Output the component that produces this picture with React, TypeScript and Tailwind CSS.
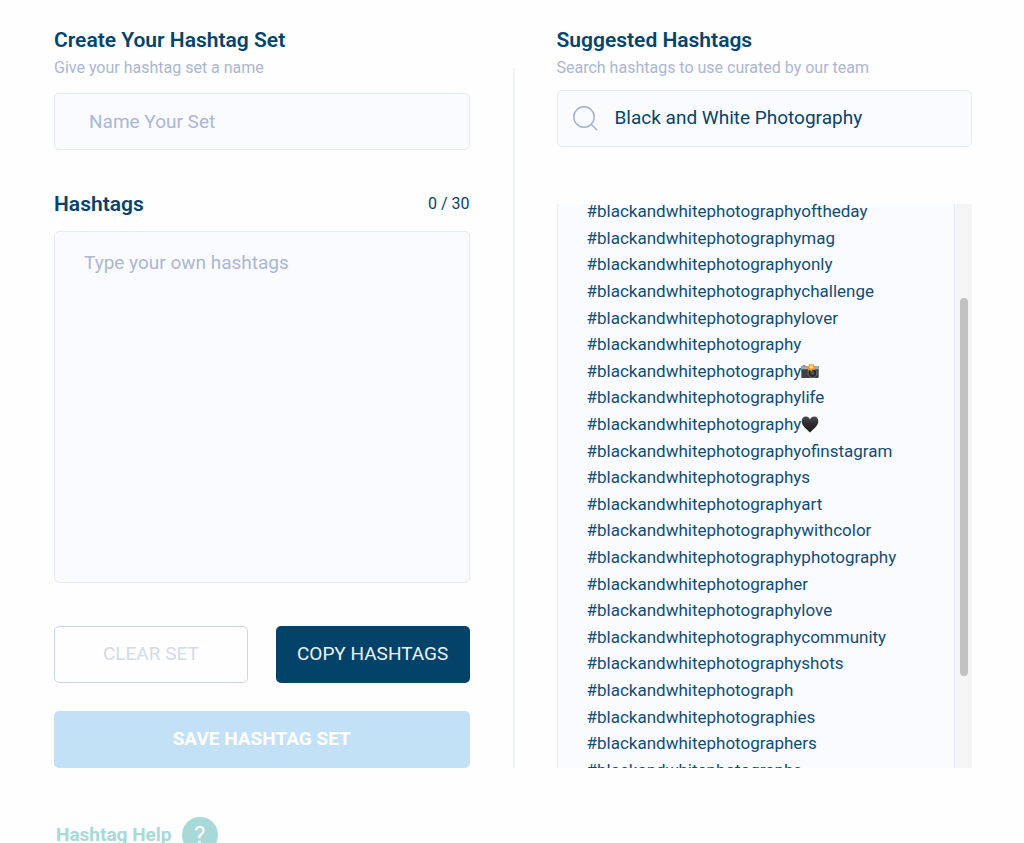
import React from "react";

const hashtags: { tag: string; symbol?: "camera" | "heart" }[] = [
  { tag: "#blackandwhitephotographyoftheday" },
  { tag: "#blackandwhitephotographymag" },
  { tag: "#blackandwhitephotographyonly" },
  { tag: "#blackandwhitephotographychallenge" },
  { tag: "#blackandwhitephotographylover" },
  { tag: "#blackandwhitephotography" },
  { tag: "#blackandwhitephotography", symbol: "camera" },
  { tag: "#blackandwhitephotographylife" },
  { tag: "#blackandwhitephotography", symbol: "heart" },
  { tag: "#blackandwhitephotographyofinstagram" },
  { tag: "#blackandwhitephotographys" },
  { tag: "#blackandwhitephotographyart" },
  { tag: "#blackandwhitephotographywithcolor" },
  { tag: "#blackandwhitephotographyphotography" },
  { tag: "#blackandwhitephotographer" },
  { tag: "#blackandwhitephotographylove" },
  { tag: "#blackandwhitephotographycommunity" },
  { tag: "#blackandwhitephotographyshots" },
  { tag: "#blackandwhitephotograph" },
  { tag: "#blackandwhitephotographies" },
  { tag: "#blackandwhitephotographers" },
  { tag: "#blackandwhitephotographs" },
];

function CameraSymbol() {
  return (
    <svg viewBox="0 0 18 16" className="h-4 w-[18px]" role="img" aria-label="camera with flash">
      <rect x="0.3" y="3" width="17.4" height="12" rx="1" fill="#3f4143" />
      <path d="M0.3 4a1 1 0 0 1 1-1h15.4a1 1 0 0 1 1 1v2.2H0.3z" fill="#a9aaa8" />
      <rect x="1.5" y="2.2" width="3" height="1.2" fill="#77787a" />
      <circle cx="11.5" cy="10" r="4.4" fill="#1c1e21" stroke="#85878a" strokeWidth="0.8" />
      <circle cx="11.5" cy="10" r="2.4" fill="#454d59" />
      <path d="M10 0l1 2 2-1.3.1 2.3 2 .6-1.7 1.5.8 2-2.3-.3L10 8.7 8.9 6.8l-2.2.6.6-2.2L5.6 3.8l2.2-.7L7.7.8l1.7 1z" fill="#f79a1c" />
      <circle cx="10.3" cy="4" r="1.7" fill="#ffe07a" />
    </svg>
  );
}

function HeartSymbol() {
  return (
    <svg viewBox="0 0 18 17" className="h-[17px] w-[18px]" role="img" aria-label="black heart">
      <defs>
        <linearGradient id="heart-shade" x1="0" y1="0" x2="0" y2="1">
          <stop offset="0" stopColor="#4a4a4a" />
          <stop offset="0.5" stopColor="#2b2b2b" />
          <stop offset="1" stopColor="#1d1d1d" />
        </linearGradient>
      </defs>
      <path
        d="M9 16.5C6.5 13.5.7 10.3.7 5.2.7 2.4 2.6.6 4.9.6 6.8.6 8.3 1.7 9 3.4 9.7 1.7 11.2.6 13.1.6c2.3 0 4.2 1.8 4.2 4.6 0 5.1-5.8 8.3-8.3 11.3z"
        fill="url(#heart-shade)"
      />
    </svg>
  );
}

function SearchIcon() {
  return (
    <svg viewBox="0 0 26 26" className="h-[26px] w-[26px] shrink-0" fill="none" stroke="#a3b0cf" strokeWidth="1.5" aria-hidden="true">
      <circle cx="11" cy="11" r="10.2" />
      <path d="M18.2 18.2L24.2 24.2" />
    </svg>
  );
}

export default function App() {
  return (
    <main className="h-screen overflow-hidden bg-[#fefefe] pt-[26px] pr-[52px] pl-[54px] font-[Roboto,'Liberation_Sans',sans-serif] text-[#05446b]">
      <div className="flex">
        <section className="flex min-w-0 flex-1 flex-col">
          <h2 className="text-[21px] leading-7 font-semibold">
            <label htmlFor="set-name">Create Your Hashtag Set</label>
          </h2>
          <p className="text-base leading-7 text-[#abb6d3]">Give your hashtag set a name</p>
          <input
            id="set-name"
            type="text"
            placeholder="Name Your Set"
            className="mt-[11px] h-[57px] w-full rounded-[5px] border border-[#e5e9fa] bg-[#fafbff] px-[34px] text-[19px] outline-none placeholder:text-[#abb6d3]"
          />
          <div className="mt-10 flex items-center justify-between">
            <h2 className="text-[21px] leading-7 font-semibold">
              <label htmlFor="own-hashtags">Hashtags</label>
            </h2>
            <span className="text-base leading-7">0 / 30</span>
          </div>
          <textarea
            id="own-hashtags"
            placeholder="Type your own hashtags"
            className="mt-[13px] h-[352px] w-full resize-none rounded-[5px] border border-[#e5e9fa] bg-[#fafbff] px-[29px] py-[17px] text-[19px] leading-7 outline-none placeholder:text-[#abb6d3]"
          />
          <div className="mt-[43px] grid grid-cols-2 gap-7">
            <button type="button" className="h-[57px] rounded-[5px] border border-[#ced5e7] text-[19px] text-[#d5dae8]">
              CLEAR SET
            </button>
            <button type="button" className="h-[57px] rounded-[5px] bg-[#044369] text-[19px] text-[#eef3f8]">
              COPY HASHTAGS
            </button>
          </div>
          <button type="button" className="mt-7 h-[57px] rounded-[5px] bg-[#c2e1f7] text-[19px] font-bold text-white">
            SAVE HASHTAG SET
          </button>
        </section>

        <div className="mt-[42px] mr-[42px] ml-[43px] w-[2px] bg-[#edf0fd]" />

        <section className="flex min-w-0 flex-1 flex-col">
          <h2 className="text-[21px] leading-7 font-semibold">
            <label htmlFor="search">Suggested Hashtags</label>
          </h2>
          <p className="text-base leading-7 text-[#abb6d3]">Search hashtags to use curated by our team</p>
          <div className="mt-2 flex h-[57px] items-center gap-4 rounded-[5px] border border-[#e5e9fa] bg-[#fafbff] px-[15px]">
            <SearchIcon />
            <input
              id="search"
              type="text"
              defaultValue="Black and White Photography"
              className="min-w-0 flex-1 bg-transparent text-[19px] outline-none"
            />
          </div>
          <div className="mt-[57px] flex h-[564px] overflow-hidden">
            <div className="min-w-0 flex-1 overflow-hidden border-x border-[#e5e9fa] bg-[#fafbff] pl-[29px]">
              <ul className="-mt-[6px] grid h-[585px] auto-rows-fr text-[17px] leading-[26px] text-[#114d73]">
                {hashtags.map(({ tag, symbol }) => (
                  <li key={tag + (symbol ?? "")} className="flex items-center">
                    {tag}
                    {symbol === "camera" && <CameraSymbol />}
                    {symbol === "heart" && <HeartSymbol />}
                  </li>
                ))}
              </ul>
            </div>
            <div className="flex w-[17px] justify-center bg-[#f5f5f5]">
              <div className="mt-[94px] h-[378px] w-2 rounded-full bg-[#c2c2c2]" />
            </div>
          </div>
        </section>
      </div>

      <a href="#help" className="mt-[49px] flex items-center gap-[10px] pl-[2px] text-[19px] leading-9 font-bold text-[#a8d9d9]">
        Hashtag Help
        <span className="flex h-9 w-9 items-center justify-center rounded-full bg-[#a8d9d9] text-[24px] font-normal text-white">?</span>
      </a>
    </main>
  );
}
